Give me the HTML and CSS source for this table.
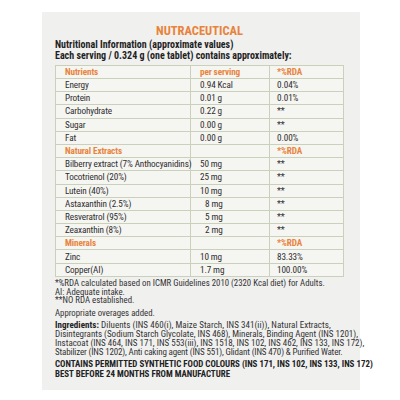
FILE: index.html
```
<!DOCTYPE html>
<html>
<head>
<meta charset="utf-8">
<link rel="stylesheet" href="styles.css">
</head>
<body>
<div class="panel">
  <h1 class="title">NUTRACEUTICAL</h1>
  <p class="lead">Nutritional Information (approximate values)<br>Each serving / 0.324 g (one tablet) contains approximately:</p>
  <table class="facts">
    <colgroup><col class="c1"><col class="c2"><col class="c3"></colgroup>
    <tr class="head"><td>Nutrients</td><td>per serving</td><td>*%RDA</td></tr>
    <tr><td>Energy</td><td>0.94 Kcal</td><td>0.04%</td></tr>
    <tr><td>Protein</td><td>0.01 g</td><td>0.01%</td></tr>
    <tr><td>Carbohydrate</td><td>0.22 g</td><td>**</td></tr>
    <tr><td>Sugar</td><td>0.00 g</td><td>**</td></tr>
    <tr><td>Fat</td><td>0.00 g</td><td>0.00%</td></tr>
    <tr class="head"><td>Natural Extracts</td><td></td><td>*%RDA</td></tr>
    <tr><td>Bilberry extract (7% Anthocyanidins)</td><td>50 mg</td><td>**</td></tr>
    <tr><td>Tocotrienol (20%)</td><td>25 mg</td><td>**</td></tr>
    <tr><td>Lutein (40%)</td><td>10 mg</td><td>**</td></tr>
    <tr><td>Astaxanthin (2.5%)</td><td><span class="pad">8 mg</span></td><td>**</td></tr>
    <tr><td>Resveratrol (95%)</td><td><span class="pad">5 mg</span></td><td>**</td></tr>
    <tr><td>Zeaxanthin (8%)</td><td><span class="pad">2 mg</span></td><td>**</td></tr>
    <tr class="head"><td>Minerals</td><td></td><td>*%RDA</td></tr>
    <tr><td>Zinc</td><td>10 mg</td><td>83.33%</td></tr>
    <tr><td>Copper(AI)</td><td>1.7 mg</td><td>100.00%</td></tr>
  </table>
  <div class="notes">
    <p>*%RDA calculated based on ICMR Guidelines 2010 (2320 Kcal diet) for Adults.</p>
    <p>AI: Adequate intake.</p>
    <p>**NO RDA established.</p>
  </div>
  <p class="overages">Appropriate overages added.</p>
  <p class="ingredients"><span class="l1"><b>Ingredients:</b> Diluents (INS 460(i), Maize Starch, INS 341(ii)), Natural Extracts,</span><br><span>Disintegrants (Sodium Starch Glycolate, INS 468), Minerals, Binding Agent (INS 1201),</span><br><span>Instacoat (INS 464, INS 171, INS 553(iii), INS 1518, INS 102, INS 462, INS 133, INS 172),</span><br><span class="l4">Stabilizer (INS 1202), Anti caking agent (INS 551), Glidant (INS 470) &amp; Purified Water.</span></p>
  <p class="caps">CONTAINS PERMITTED SYNTHETIC FOOD COLOURS (INS 171, INS 102, INS 133, INS 172)</p>
  <p class="caps best">BEST BEFORE 24 MONTHS FROM MANUFACTURE</p>
</div>
</body>
</html>
```
FILE: styles.css
```
html, body {
  margin: 0;
  padding: 0;
  background: #ffffff;
}
body {
  font-family: "Roboto", "Liberation Sans", sans-serif;
  font-stretch: 75%;
  color: #2b2b2b;
}
.panel {
  margin: 12px 0 0 42px;
  width: 318px;
  height: 378px;
  box-sizing: border-box;
  padding: 12px 10px 0 13px;
  background: #f0f0ef;
  white-space: nowrap;
}
.title {
  margin: 0;
  text-align: center;
  font-size: 12.5px;
  line-height: 14px;
  font-weight: bold;
  color: #e8833a;
  padding-right: 6px;
}
.lead {
  margin: 1px 0 0;
  font-size: 10px;
  line-height: 11.4px;
  font-weight: bold;
  color: #1f1f1f;
}
.facts {
  margin-top: 3px;
  border-collapse: collapse;
  width: 288px;
  table-layout: fixed;
  background: #f5f5f2;
  font-size: 9.2px;
  letter-spacing: -0.12px;
}
.c1 { width: 135px; }
.c2 { width: 79px; }
.c3 { width: 74px; }
.facts td {
  border: 1px solid #c9d1bb;
  height: 12.2px;
  padding: 0 0 0 9px;
  line-height: 12px;
  color: #2e2e2e;
}
.facts td:nth-child(3) { padding-left: 7px; }
.facts .head td {
  color: #e8843c;
  font-weight: bold;
}
.pad { padding-left: 5px; }
.notes { margin-top: 2px; }
.notes p, .overages {
  margin: 0;
  font-size: 8.8px;
  line-height: 8.7px;
  color: #333;
}
.overages { margin-top: 4px; }
.ingredients {
  margin: 3px 0 0;
  font-size: 9px;
  line-height: 9px;
  color: #333;
}
.ingredients b { color: #222; }
.l1 { letter-spacing: 0.05px; }
.l4 { letter-spacing: -0.15px; }
.caps {
  margin: 3px 0 0;
  font-size: 8.9px;
  line-height: 9.5px;
  font-weight: bold;
  color: #222;
}
.caps.best { margin-top: 1px; }
```
